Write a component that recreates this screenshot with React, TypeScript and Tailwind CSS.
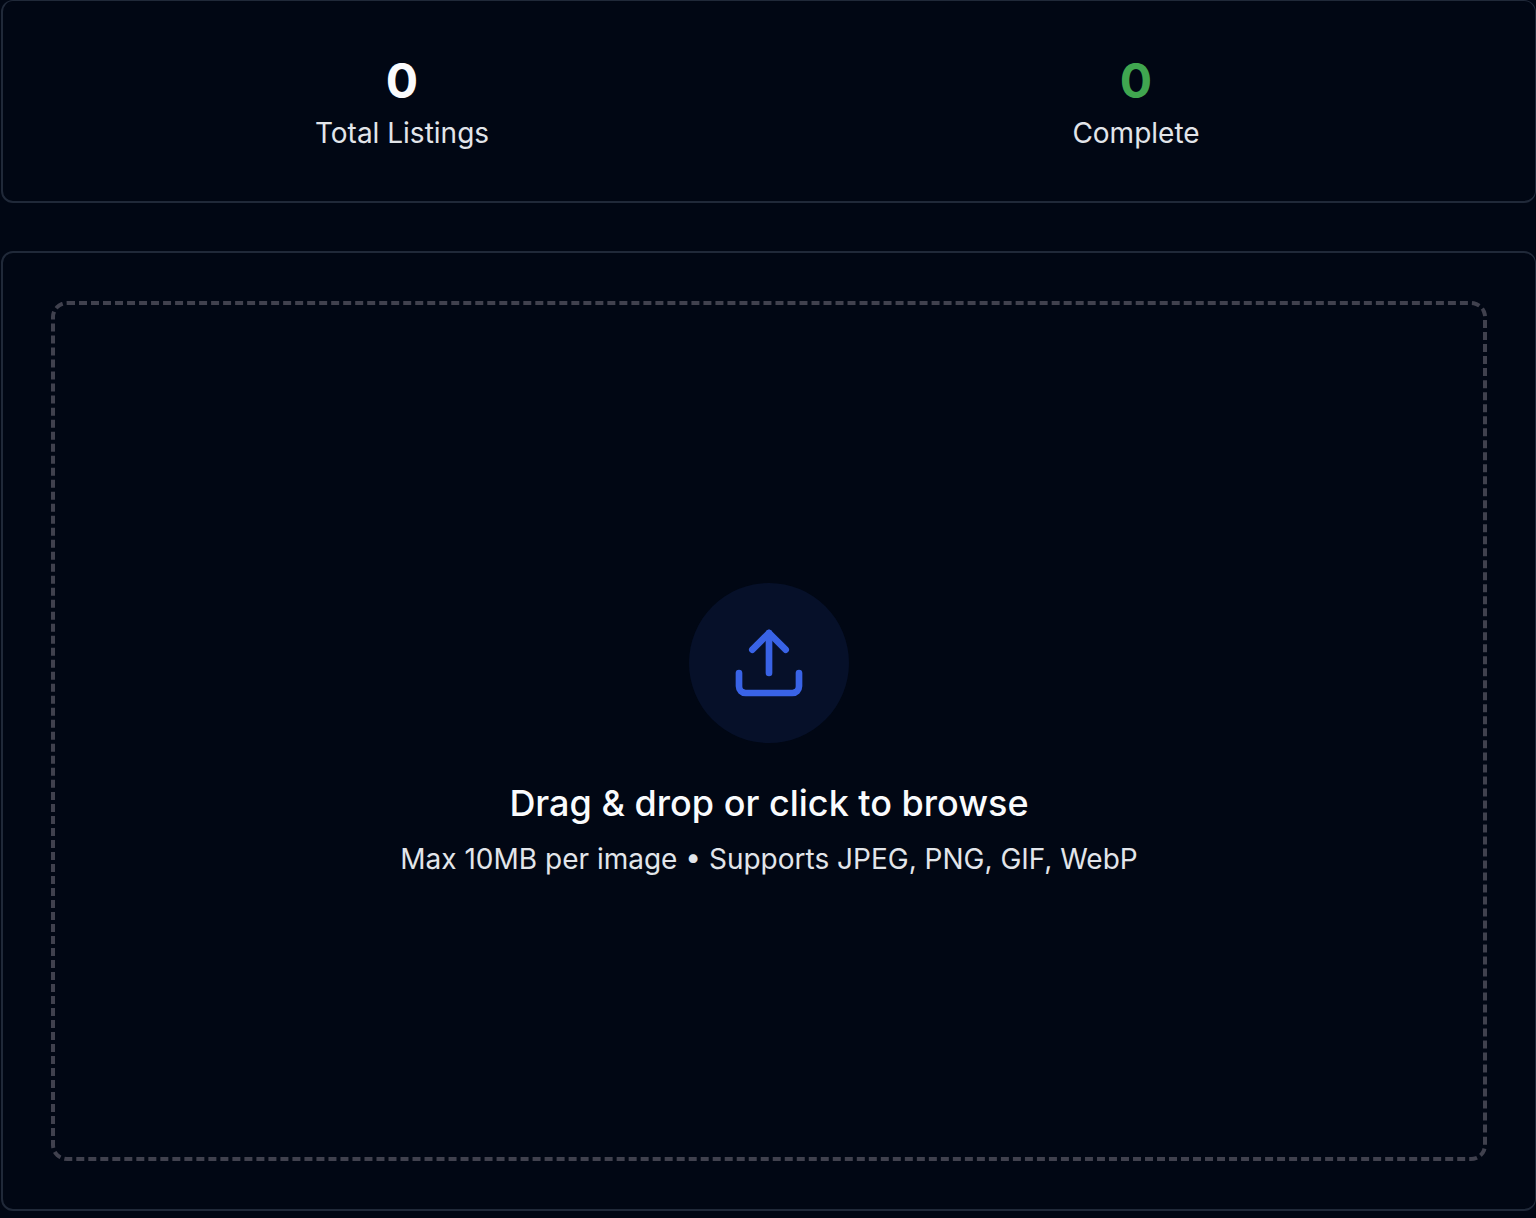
import { Upload } from "lucide-react";

const stats = [
  { label: "Total Listings", value: 0, color: "text-[#fafbfd]" },
  { label: "Complete", value: 0, color: "text-[#40a650]" },
];

function Stats() {
  return (
    <section className="rounded-xl border-2 border-t border-r border-[#202939] p-12">
      <div className="grid grid-cols-2 gap-8">
        {stats.map((stat) => (
          <div key={stat.label} className="text-center">
            <div className={`text-5xl leading-[64px] font-bold ${stat.color}`}>{stat.value}</div>
            <div className="text-[28px] leading-10 text-[#e2e5ea]">{stat.label}</div>
          </div>
        ))}
      </div>
    </section>
  );
}

function Dropzone() {
  return (
    <section className="rounded-xl border-2 border-r border-[#202939] p-12">
      <button
        type="button"
        className="flex h-[860px] w-full flex-col items-center justify-center rounded-2xl border-4 border-dashed border-[#40414e]"
      >
        <span className="mb-8 flex size-40 items-center justify-center rounded-full bg-[#061029]">
          <Upload className="size-20 text-[#3963e6]" />
        </span>
        <span className="mb-2 text-4xl leading-[56px] font-medium text-[#fafbfd]">
          Drag &amp; drop or click to browse
        </span>
        <span className="text-[28px] leading-10 text-[#e2e5ea]">
          Max 10MB per image • Supports JPEG, PNG, GIF, WebP
        </span>
      </button>
    </section>
  );
}

export default function App() {
  return (
    <main className="flex min-h-screen flex-col gap-12 bg-[#010714] pl-px font-['Inter',sans-serif]">
      <Stats />
      <Dropzone />
    </main>
  );
}
